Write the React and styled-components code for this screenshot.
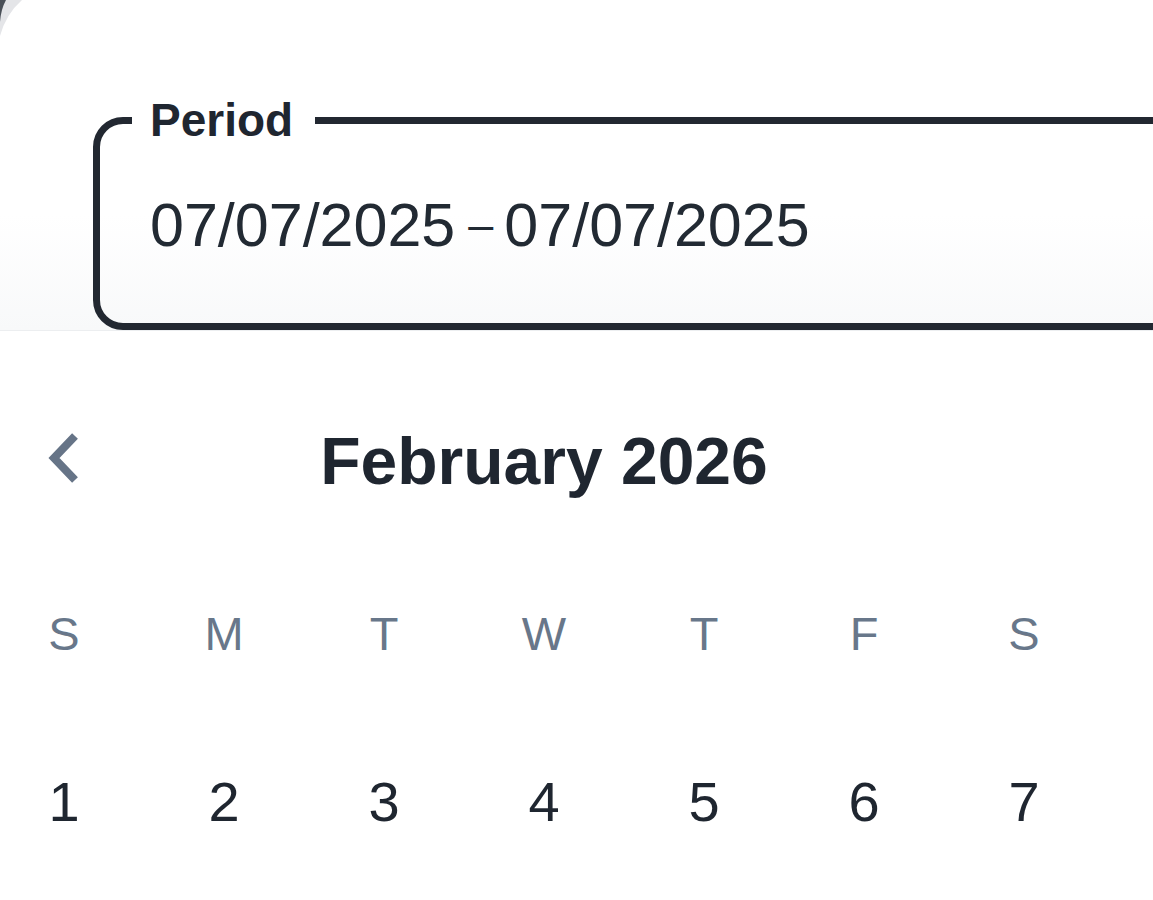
import styled, { createGlobalStyle } from "styled-components";

const GlobalStyle = createGlobalStyle`
  html, body {
    margin: 0;
    padding: 0;
    background: #ffffff;
  }
  body {
    font-family: "Liberation Sans", Arial, sans-serif;
    color: #1f2630;
  }
`;

const weekdays = ["S", "M", "T", "W", "T", "F", "S"];
const days = [1, 2, 3, 4, 5, 6, 7];

const Screen = styled.div`
  position: relative;
  width: 1153px;
  height: 900px;
  overflow: hidden;
  background: #ffffff;
`;

// dark bezel + rim peeking in at the top-left corner
const Corner = styled.svg`
  position: absolute;
  top: 0;
  left: 0;
`;

const Header = styled.div`
  padding: 97px 0 0 93px;
  background: linear-gradient(180deg, #ffffff 65%, #f8f9fa 100%);
  border-bottom: 1px solid #eceef0;
`;

const Field = styled.fieldset`
  margin: 0;
  padding: 0;
  width: 1120px;
  min-width: 0;
  border: 7px solid #222831;
  border-radius: 30px;
  box-sizing: border-box;
`;

const Legend = styled.legend`
  margin-left: 32px;
  padding: 0 22px 0 18px;
  font-size: 46px;
  line-height: 46px;
  font-weight: 700;
  color: #1f2630;
`;

const Value = styled.div`
  padding: 51px 0 67px 50px;
  font-size: 61px;
  line-height: 61px;
  color: #222a33;
  white-space: nowrap;
`;

const Dash = styled.span`
  display: inline-block;
  font-size: 45px;
  margin: 0 11px 0 13px;
  vertical-align: 6px;
`;

const Calendar = styled.div`
  padding-top: 63px;
  width: 1088px;
`;

const Grid = styled.div`
  display: grid;
  grid-template-columns: repeat(7, 128px);
  column-gap: 32px;
  height: 128px;
  margin-top: ${(p) => p.$gap || 0}px;
  align-items: center;
  justify-items: center;
`;

const NavButton = styled.button`
  width: 128px;
  height: 128px;
  border: 0;
  padding: 0;
  background: transparent;
  display: flex;
  align-items: center;
  justify-content: center;
  cursor: pointer;
`;

const Title = styled.div`
  grid-column: 2 / span 5;
  margin-top: 6px;
  font-size: 66px;
  font-weight: 700;
  color: #1f2630;
`;

const Weekday = styled.div`
  font-size: 47px;
  color: #68778a;
`;

const Day = styled.div`
  font-size: 56px;
  color: #1f2630;
`;

export default function App() {
  return (
    <Screen>
      <GlobalStyle />
      <Header>
        <Field>
          <Legend>Period</Legend>
          <Value>
            <span>07/07/2025</span>
            <Dash>–</Dash>
            <span>07/07/2025</span>
          </Value>
        </Field>
      </Header>
      <Calendar>
        <Grid>
          <NavButton aria-label="Previous month">
            <svg width="34" height="52" viewBox="0 0 34 52">
              <polyline
                points="28,4 7,26 28,48"
                fill="none"
                stroke="#667487"
                strokeWidth="8"
              />
            </svg>
          </NavButton>
          <Title>February 2026</Title>
        </Grid>
        <Grid $gap={47}>
          {weekdays.map((d, i) => (
            <Weekday key={i}>{d}</Weekday>
          ))}
        </Grid>
        <Grid $gap={40}>
          {days.map((d) => (
            <Day key={d}>{d}</Day>
          ))}
        </Grid>
      </Calendar>
      <Corner width="30" height="40" viewBox="0 0 30 40">
        <path d="M0 0 H22 Q6 14 0 36 Z" fill="#e4e5e8" />
        <path d="M0 0 H6 Q1 9 0 22 Z" fill="#4a5058" />
      </Corner>
    </Screen>
  );
}
